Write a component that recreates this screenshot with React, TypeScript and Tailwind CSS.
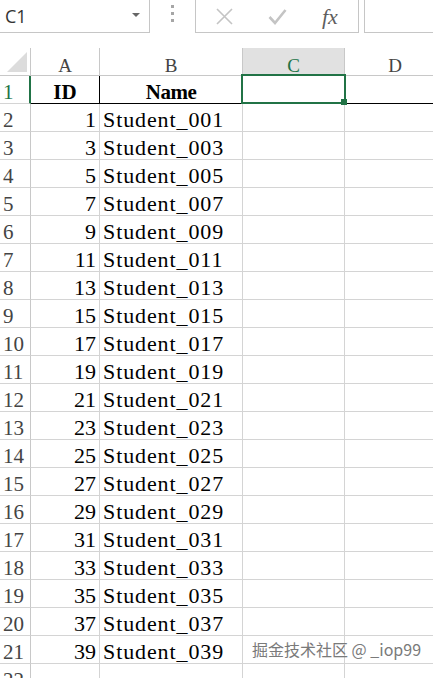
import React from "react";

const serif = { fontFamily: '"Liberation Serif", "Times New Roman", serif' };

const rows = Array.from({ length: 20 }, (_, i) => {
  const id = i * 2 + 1;
  return { n: i + 2, id, name: `Student_${String(id).padStart(3, "0")}` };
});

function RowHeader({ n, active }: { n: number; active?: boolean }) {
  return (
    <div
      className={`w-[31px] shrink-0 h-full flex items-end pl-[3px] border-b border-[#d4d4d4] text-[21px] leading-none ${
        active ? "border-r-2 border-r-[#217346] text-[#217346]" : "border-r border-r-[#c8c8c8] text-[#444]"
      }`}
      style={serif}
    >
      {n}
    </div>
  );
}

export default function App() {
  return (
    <div className="w-[433px] h-[678px] overflow-hidden bg-white relative">
      {/* formula bar */}
      <div className="flex h-[33px]">
        <div
          className="w-[150px] shrink-0 h-[33px] border-r border-b border-[#c6c6c6] flex items-center pl-[5px] relative"
          style={{ fontFamily: '"Open Sans", "Noto Sans", sans-serif' }}
        >
          <span className="text-[18px] text-[#333] leading-none">C1</span>
          <div className="absolute left-[132px] top-[13px] w-0 h-0 border-l-[4px] border-r-[4px] border-t-[4px] border-l-transparent border-r-transparent border-t-[#666]" />
        </div>
        <div className="w-[45px] shrink-0 flex flex-col items-center pt-[5px] gap-[4px]">
          <div className="w-[3px] h-[3px] bg-[#a6a6a6]" />
          <div className="w-[3px] h-[3px] bg-[#a6a6a6]" />
          <div className="w-[3px] h-[3px] bg-[#a6a6a6]" />
        </div>
        <div className="w-[164px] shrink-0 h-[33px] border-l border-r border-b border-[#c6c6c6] relative">
          <svg className="absolute left-[19px] top-[8px]" width="19" height="17" viewBox="0 0 19 17">
            <path d="M2 1 L17 16 M17 1 L2 16" stroke="#c4c4c4" strokeWidth="1.6" fill="none" />
          </svg>
          <svg className="absolute left-[72px] top-[8px]" width="19" height="17" viewBox="0 0 19 17">
            <path d="M1.5 9 L7 15 L17.5 2" stroke="#c4c4c4" strokeWidth="2.6" fill="none" />
          </svg>
          <span
            className="absolute left-[126px] top-[6px] text-[22px] italic text-[#5e5e5e] leading-none"
            style={{ fontFamily: '"Liberation Serif", serif' }}
          >
            fx
          </span>
        </div>
        <div className="w-[5px] shrink-0" />
        <div className="flex-1 h-[33px] border-l border-b border-[#c6c6c6]" />
      </div>
      <div className="h-[15px]" />

      {/* grid */}
      <div className="relative">
        {/* column header */}
        <div className="flex h-[28px] text-[19px] leading-none text-[#444]" style={serif}>
          <div className="w-[31px] shrink-0 border-r border-b border-[#c8c8c8] relative">
            <svg className="absolute left-[7px] top-[4px]" width="20" height="20" viewBox="0 0 20 20">
              <path d="M20 0 L20 20 L0 20 Z" fill="#dcdcdc" />
            </svg>
          </div>
          <div className="w-[69px] shrink-0 border-r border-b border-[#c8c8c8] flex items-end justify-center">A</div>
          <div className="w-[143px] shrink-0 border-r border-b border-[#c8c8c8] flex items-end justify-center">B</div>
          <div className="w-[102px] shrink-0 border-r border-b border-[#c8c8c8] bg-[#e1e1e1] flex items-end justify-center text-[#217346]">
            C
          </div>
          <div className="flex-1 border-b border-[#c8c8c8] flex items-end justify-center">
            <span className="w-[100px] text-center">D</span>
          </div>
        </div>

        {/* row 1 */}
        <div className="flex h-[28px]">
          <RowHeader n={1} active />
          <div
            className="w-[69px] shrink-0 border-r border-b border-black flex items-end justify-center text-[21px] font-bold leading-none text-black"
            style={serif}
          >
            ID
          </div>
          <div
            className="w-[143px] shrink-0 border-r border-r-[#d4d4d4] border-b border-b-black flex items-end justify-center text-[21px] font-bold leading-none text-black tracking-[-0.5px]"
            style={serif}
          >
            Name
          </div>
          <div className="w-[102px] shrink-0 border-r border-r-[#d4d4d4] border-b border-b-black" />
          <div className="flex-1 border-b border-black" />
        </div>

        {/* data rows */}
        {rows.map((r) => (
          <div key={r.n} className="flex h-[28px]">
            <RowHeader n={r.n} />
            <div
              className="w-[69px] shrink-0 border-r border-b border-[#d4d4d4] flex items-end justify-end pr-[3px] text-[22px] leading-none text-black"
              style={serif}
            >
              {r.id}
            </div>
            <div
              className="w-[143px] shrink-0 border-r border-b border-[#d4d4d4] flex items-end pl-[3px] text-[22px] leading-none text-black tracking-[0.9px]"
              style={serif}
            >
              {r.name}
            </div>
            <div className="w-[102px] shrink-0 border-r border-b border-[#d4d4d4]" />
            <div className="flex-1 border-b border-[#d4d4d4]" />
          </div>
        ))}

        {/* row 22 */}
        <div className="flex h-[28px]">
          <RowHeader n={22} />
          <div className="w-[69px] shrink-0 border-r border-b border-[#d4d4d4]" />
          <div className="w-[143px] shrink-0 border-r border-b border-[#d4d4d4]" />
          <div className="w-[102px] shrink-0 border-r border-b border-[#d4d4d4]" />
          <div className="flex-1 border-b border-[#d4d4d4]" />
        </div>

        {/* selection */}
        <div className="absolute left-[241px] top-[26px] w-[105px] h-[30px] border-2 border-[#217346]" />
        <div className="absolute left-[341px] top-[51px] w-[6px] h-[6px] bg-[#217346]" />
      </div>

      {/* watermark */}
      <div
        className="absolute left-[252px] top-[641px] text-[16px] leading-none text-[#7a7a7a] whitespace-nowrap"
        style={{ fontFamily: '"Noto Sans CJK SC", "Noto Sans", sans-serif' }}
      >
        掘金技术社区 @ _iop99
      </div>
    </div>
  );
}
